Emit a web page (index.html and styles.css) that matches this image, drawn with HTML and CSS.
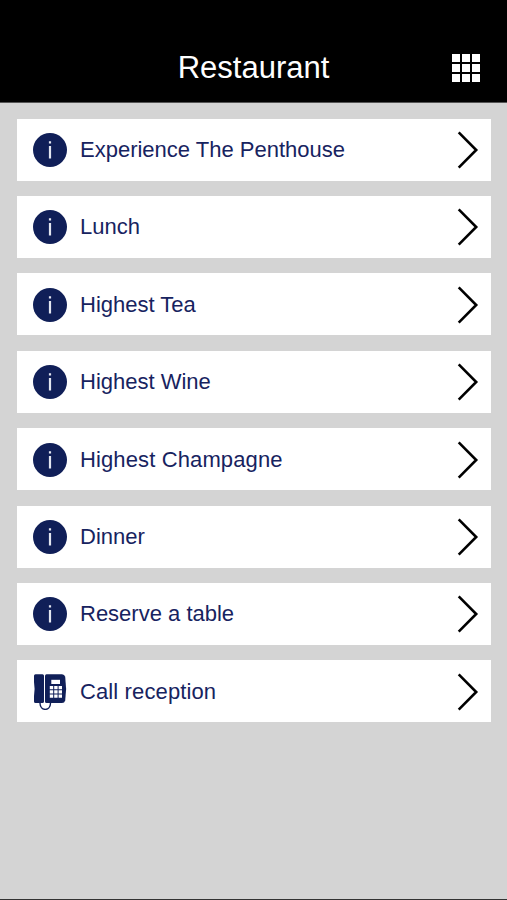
FILE: index.html
```html
<!DOCTYPE html>
<html lang="en">
<head>
    <meta charset="UTF-8">
    <meta name="viewport" content="width=device-width, initial-scale=1.0">
    <title>Restaurant</title>
    <link rel="stylesheet" href="styles.css">
</head>
<body>
    <!-- Shared icons -->
    <svg class="sprite" width="0" height="0">
        <symbol id="info" viewBox="0 0 36 36">
            <circle cx="18" cy="18" r="17" fill="#101f58"/>
            <path d="M16.900 9.200h2.200v2.400h-2.200zM16.900 14h2.200v12.600h-2.200z" fill="#e2e5ef"/>
        </symbol>
        <symbol id="arrow" viewBox="0 0 24 40">
            <path d="M3.700 2.400L21.200 20L3.700 37.600" fill="none" stroke="#000" stroke-width="2.600"/>
        </symbol>
        <symbol id="phone" viewBox="0 0 36 36">
            <path d="M8 29c0 8.500 10.500 8.500 10.500 0" fill="none" stroke="#101f58" stroke-width="1.400"/>
            <path d="M3.500 .3H10.500q1.500 0 1.500 1.500V27.500q0 1.500-1.500 1.500H3.500Q2 29 2 27.500V22q1.200-7 0-14V1.800Q2 .3 3.500 .3z" fill="#101f58"/>
            <path d="M14.500 .3H30q2.500 0 3.200 2.500 1.800 12 0 23.700-.7 2.500-3.200 2.500H14.500q-1.500 0-1.500-1.500V1.800Q13 .3 14.500 .3z" fill="#101f58"/>
            <path d="M19.300 5.800h8.700v4.200h-8.700z" fill="#fff"/>
            <path d="M17.800 12h3.400v3.200h-3.400zM22.200 12h3.400v3.200h-3.400zM26.600 12h3.400v3.200h-3.400zM17.800 16.300h3.400v3.200h-3.400zM22.200 16.300h3.400v3.200h-3.400zM26.600 16.300h3.400v3.200h-3.400zM17.800 20.600h3.400v3.200h-3.400zM22.200 20.600h3.400v3.200h-3.400zM26.600 20.600h3.400v3.200h-3.400z" fill="#fff"/>
        </symbol>
    </svg>

    <header class="header">
        <h1>Restaurant</h1>
        <div class="menu">
            <span></span><span></span><span></span>
            <span></span><span></span><span></span>
            <span></span><span></span><span></span>
        </div>
    </header>

    <main class="list">
        <a class="item">
            <svg class="icon"><use href="#info"/></svg>
            <span class="label">Experience The Penthouse</span>
            <svg class="arrow"><use href="#arrow"/></svg>
        </a>
        <a class="item">
            <svg class="icon"><use href="#info"/></svg>
            <span class="label">Lunch</span>
            <svg class="arrow"><use href="#arrow"/></svg>
        </a>
        <a class="item">
            <svg class="icon"><use href="#info"/></svg>
            <span class="label">Highest Tea</span>
            <svg class="arrow"><use href="#arrow"/></svg>
        </a>
        <a class="item">
            <svg class="icon"><use href="#info"/></svg>
            <span class="label">Highest Wine</span>
            <svg class="arrow"><use href="#arrow"/></svg>
        </a>
        <a class="item">
            <svg class="icon"><use href="#info"/></svg>
            <span class="label wide">Highest Champagne</span>
            <svg class="arrow"><use href="#arrow"/></svg>
        </a>
        <a class="item">
            <svg class="icon"><use href="#info"/></svg>
            <span class="label">Dinner</span>
            <svg class="arrow"><use href="#arrow"/></svg>
        </a>
        <a class="item">
            <svg class="icon"><use href="#info"/></svg>
            <span class="label">Reserve a table</span>
            <svg class="arrow"><use href="#arrow"/></svg>
        </a>
        <a class="item">
            <svg class="icon"><use href="#phone"/></svg>
            <span class="label wide">Call reception</span>
            <svg class="arrow"><use href="#arrow"/></svg>
        </a>
    </main>
</body>
</html>
```

FILE: styles.css
```css
* {
    box-sizing: border-box;
}

body {
    margin: 0;
    height: 100vh;
    display: flex;
    flex-direction: column;
    font-family: "Liberation Sans", Arial, sans-serif;
    background-color: #d4d4d4;
    border-bottom: 1px solid #333;
    overflow: hidden;
}

.sprite {
    display: block;
    flex: none;
}

.header {
    display: grid;
    grid-template-columns: 28px 1fr 28px;
    align-items: center;
    height: 103px;
    padding: 34px 27px 0;
    background-color: #000;
    border-bottom: 1px solid #555;
}

.header h1 {
    grid-column: 2;
    margin: 0;
    font-size: 31px;
    line-height: 36px;
    font-weight: normal;
    text-align: center;
    color: #fff;
}

.menu {
    display: grid;
    grid-template-columns: repeat(3, 8px);
    grid-auto-rows: 8px;
    gap: 2px;
}

.menu span {
    background-color: #fff;
}

.list {
    display: flex;
    flex-direction: column;
    gap: 15.4px;
    padding: 15.6px 16px 0 16.5px;
}

.item {
    display: flex;
    align-items: center;
    height: 62px;
    padding: 1px 12px 0 15.5px;
    background-color: #fff;
    color: #17235f;
}

.icon {
    width: 36px;
    height: 36px;
}

.label {
    flex: 1;
    padding-left: 12px;
    font-size: 22px;
    line-height: 26px;
}

.wide {
    letter-spacing: 0.12px;
}

.arrow {
    width: 24px;
    height: 40px;
}
```
